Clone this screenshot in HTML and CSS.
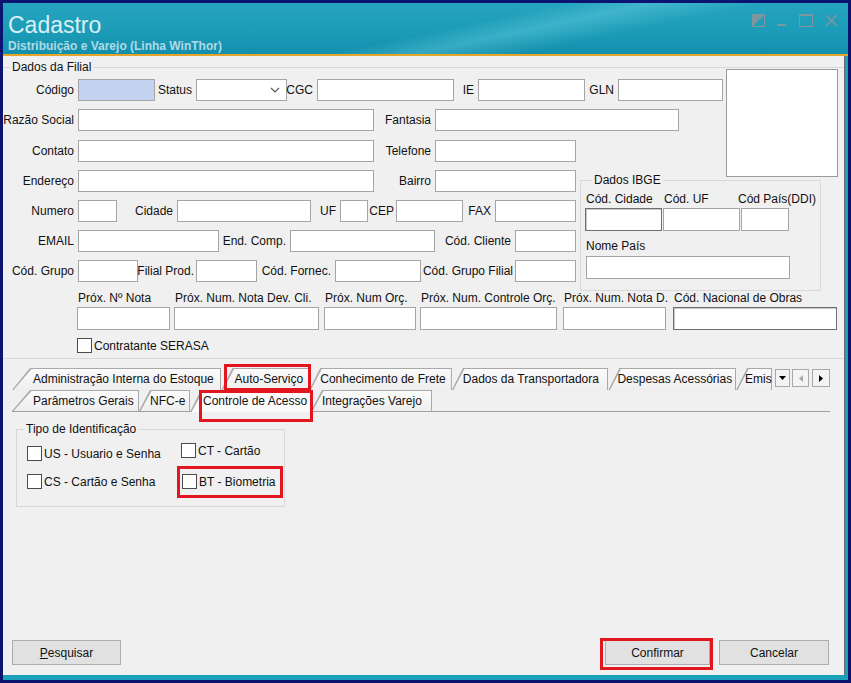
FILE: index.html
```html
<!DOCTYPE html>
<html lang="pt-BR">
<head>
<meta charset="utf-8">
<title>Cadastro</title>
<link rel="stylesheet" href="styles.css">
</head>
<body>
<div class="window">
  <header class="titlebar">
    <div class="titles">
      <div class="title">Cadastro</div>
      <div class="subtitle">Distribuição e Varejo (Linha WinThor)</div>
    </div>
    <div class="controls">
      <svg class="ctl" width="13" height="13" viewBox="0 0 13 13"><rect x="0.5" y="0.5" width="12" height="12" fill="none" stroke="currentColor"/><polygon points="0,0 13,0 0,13" fill="currentColor"/></svg>
      <svg class="ctl" width="10" height="13" viewBox="0 0 10 13"><rect x="0" y="10" width="9" height="2" fill="currentColor"/></svg>
      <svg class="ctl" width="14" height="13" viewBox="0 0 14 13"><rect x="0.5" y="0.5" width="13" height="12" fill="none" stroke="currentColor"/><rect x="0" y="0" width="14" height="2" fill="currentColor"/></svg>
      <svg class="ctl" width="13" height="13" viewBox="0 0 13 13"><path d="M1 1 L12 12 M12 1 L1 12" stroke="currentColor" stroke-width="1.6"/></svg>
    </div>
  </header>
  <div class="accent"></div>

  <main class="client">
    <section class="group filial">
      <span class="legend">Dados da Filial</span>
      <div class="filial-top">
        <div class="filial-main">
          <div class="row">
            <span class="lbl w75">Código</span><span class="field key w77"></span>
            <span class="lbl w41">Status</span>
            <span class="field select w91"><svg width="10" height="6" viewBox="0 0 10 6"><path d="M1 1 L5 5 L9 1" fill="none" stroke="#555" stroke-width="1.1"/></svg></span>
            <span class="lbl w30">CGC</span><span class="field w137"></span>
            <span class="lbl w24">IE</span><span class="field w107"></span>
            <span class="lbl w33">GLN</span><span class="field w105"></span>
          </div>
          <div class="row">
            <span class="lbl w75">Razão Social</span><span class="field w296"></span>
            <span class="lbl w61">Fantasia</span><span class="field w244"></span>
          </div>
          <div class="split">
            <div class="left-rows">
              <div class="row">
                <span class="lbl w75">Contato</span><span class="field w296"></span>
                <span class="lbl w61">Telefone</span><span class="field w141"></span>
              </div>
              <div class="row">
                <span class="lbl w75">Endereço</span><span class="field w296"></span>
                <span class="lbl w61">Bairro</span><span class="field w141"></span>
              </div>
              <div class="row">
                <span class="lbl w75">Numero</span><span class="field w39"></span>
                <span class="lbl w60">Cidade</span><span class="field w134"></span>
                <span class="lbl w29">UF</span><span class="field w28"></span>
                <span class="lbl w28 tight">CEP</span><span class="field w67"></span>
                <span class="lbl w32">FAX</span><span class="field w81"></span>
              </div>
              <div class="row">
                <span class="lbl w75">EMAIL</span><span class="field w141"></span>
                <span class="lbl w71">End. Comp.</span><span class="field w145"></span>
                <span class="lbl w80">Cód. Cliente</span><span class="field w61"></span>
              </div>
              <div class="row">
                <span class="lbl w75">Cód. Grupo</span><span class="field w60"></span>
                <span class="lbl w58 tight">Filial Prod.</span><span class="field w61"></span>
                <span class="lbl w78">Cód. Fornec.</span><span class="field w86"></span>
                <span class="lbl w94 tight">Cód. Grupo Filial</span><span class="field w61"></span>
              </div>
            </div>
            <section class="group ibge">
              <span class="legend">Dados IBGE</span>
              <div class="ibge-cols">
                <div class="col w77"><span class="cap">Cód. Cidade</span><span class="field tall dark"></span></div>
                <div class="col w77"><span class="cap">Cód. UF</span><span class="field tall"></span></div>
                <div class="col w48 ddi"><span class="cap">Cód País(DDI)</span><span class="field tall"></span></div>
              </div>
              <div class="col nome"><span class="cap">Nome País</span><span class="field tall w204"></span></div>
            </section>
          </div>
        </div>
        <div class="photo"></div>
      </div>

      <div class="next-nums">
        <div class="col w93"><span class="cap">Próx. Nº Nota</span><span class="field tall"></span></div>
        <div class="col w145"><span class="cap">Próx. Num. Nota Dev. Cli.</span><span class="field tall"></span></div>
        <div class="col w92"><span class="cap">Próx. Num Orç.</span><span class="field tall"></span></div>
        <div class="col w137"><span class="cap">Próx. Num. Controle Orç.</span><span class="field tall"></span></div>
        <div class="col w103"><span class="cap">Próx. Num. Nota D.</span><span class="field tall"></span></div>
        <div class="col w164"><span class="cap">Cód. Nacional de Obras</span><span class="field tall dark"></span></div>
      </div>

      <label class="check serasa"><span class="box"></span>Contratante SERASA</label>
    </section>

    <nav class="tabs">
      <div class="tab-row">
        <div class="tab first t-adm"><span>Administração Interna do Estoque</span></div>
        <div class="tab t-auto"><span>Auto-Serviço</span></div>
        <div class="tab t-conh"><span>Conhecimento de Frete</span></div>
        <div class="tab t-dados"><span>Dados da Transportadora</span></div>
        <div class="tab t-desp"><span>Despesas Acessórias</span></div>
        <div class="tab t-emis"><span>Emiss</span></div>
        <div class="scroll">
          <span class="sbtn down"><svg width="7" height="4" viewBox="0 0 7 4"><polygon points="0,0 7,0 3.5,4" fill="#000"/></svg></span>
          <span class="sbtn off"><svg width="4" height="7" viewBox="0 0 4 7"><polygon points="4,0 4,7 0,3.5" fill="#a8a8a8"/></svg></span>
          <span class="sbtn"><svg width="4" height="7" viewBox="0 0 4 7"><polygon points="0,0 0,7 4,3.5" fill="#000"/></svg></span>
        </div>
      </div>
      <div class="tab-row lower">
        <div class="tab first t-param"><span>Parâmetros Gerais</span></div>
        <div class="tab t-nfc"><span>NFC-e</span></div>
        <div class="tab active t-ctrl"><span>Controle de Acesso</span></div>
        <div class="tab t-integ"><span>Integrações Varejo</span></div>
      </div>
    </nav>

    <section class="panel">
      <div class="group ident">
        <span class="legend">Tipo de Identificação</span>
        <div class="ident-grid">
          <label class="check"><span class="box"></span>US - Usuario e Senha</label>
          <label class="check up"><span class="box"></span>CT - Cartão</label>
          <label class="check"><span class="box"></span>CS - Cartão e Senha</label>
          <label class="check nudge"><span class="box"></span>BT - Biometria</label>
        </div>
      </div>
    </section>

    <footer class="actions">
      <button class="btn w109"><u>P</u>esquisar</button>
      <span class="spacer"></span>
      <button class="btn w105">Confirmar</button>
      <button class="btn w110">Cancelar</button>
    </footer>
  </main>
</div>

<div class="mark m-auto"></div>
<div class="mark m-ctrl"></div>
<div class="mark m-bt"></div>
<div class="mark m-ok"></div>
</body>
</html>
```

FILE: styles.css
```css
* { box-sizing: border-box; }

html, body { margin: 0; }

body {
  position: relative;
  width: 851px;
  height: 683px;
  padding: 3px;
  overflow: hidden;
  background: #0b1470;
  font-family: "Liberation Sans", Arial, sans-serif;
  font-size: 12px;
  color: #111;
}

/* ---------- window frame ---------- */
.window {
  width: 845px;
  height: 677px;
  display: flex;
  flex-direction: column;
  background: #1aa0b8;
}

.titlebar {
  height: 51px;
  flex: none;
  display: flex;
  justify-content: space-between;
  background:
    linear-gradient(168deg, rgba(255,255,255,0) 52%, rgba(120,215,232,0.35) 60%, rgba(255,255,255,0) 70%),
    linear-gradient(180deg, #26a4bf 0%, #1b9bb7 60%, #138fac 100%);
}

.titles { padding: 9px 0 0 5px; }

.title {
  font-size: 23px;
  line-height: 26px;
  color: #d9eff5;
}

.subtitle {
  margin-top: 1px;
  font-size: 12px;
  line-height: 14px;
  font-weight: bold;
  color: #aedbe7;
}

.controls {
  display: flex;
  align-items: flex-start;
  gap: 12px;
  padding: 11px 10px 0 0;
  color: #7f969f;
}
.ctl { display: block; }

.accent {
  height: 2px;
  flex: none;
  background: #e4a52a;
}

.client {
  height: 619px;
  margin: 0 3px 0 0;
  display: flex;
  flex-direction: column;
  background: #f0f0f0;
  border-right: 1px solid #6a6a6a;
}

/* ---------- group boxes ---------- */
.group {
  border: 1px solid #d9d9d9;
}

.legend {
  display: block;
  width: fit-content;
  margin: -8px 0 0 7px;
  padding: 0 2px;
  line-height: 14px;
  background: #f0f0f0;
}

.filial {
  margin-top: 11px;
  border-left: none;
  border-right: none;
  padding-bottom: 5px;
}

.filial-top {
  display: flex;
  margin-top: -5px;
}

.filial-main {
  width: 720px;
  flex: none;
  padding-top: 10px;
  display: flex;
  flex-direction: column;
  gap: 8px;
}

.photo {
  width: 112px;
  height: 108px;
  flex: none;
  margin-left: 3px;
  background: #fff;
  border: 1px solid #9a9a9a;
}

/* lower rows share their height with the IBGE box, which reaches under the photo */
.split {
  width: 818px;
  display: flex;
  align-items: flex-start;
  margin-top: 1px;
}

.left-rows {
  width: 573px;
  flex: none;
  display: flex;
  flex-direction: column;
  gap: 8px;
}

.row {
  height: 22px;
  display: flex;
}

.lbl {
  display: flex;
  justify-content: flex-end;
  align-items: center;
  padding-right: 4px;
  white-space: nowrap;
}
.lbl.tight { padding-right: 2px; }

.field {
  display: block;
  height: 22px;
  background: #fff;
  border: 1px solid #a5a5a5;
}
.field.tall { height: 23px; }
.field.key { background: #c4d3ef; }
.field.dark { border-color: #6f6f6f; box-shadow: inset 1px 1px 0 #c8c8c8; }

.select {
  display: flex;
  align-items: center;
  justify-content: flex-end;
  padding-right: 6px;
}

/* ---------- IBGE ---------- */
.ibge {
  width: 241px;
  height: 111px;
  flex: none;
  margin: 40px 0 0 4px;
  padding: 0 0 0 4px;
}

.ibge-cols {
  display: flex;
  margin-top: 5px;
}
.ibge-cols .col + .col { margin-left: 1px; }
.ibge-cols .ddi { margin-left: 4px; }
.ddi .cap { margin-left: -3px; }

.col {
  display: flex;
  flex-direction: column;
}

.cap {
  line-height: 14px;
  margin-bottom: 2px;
  margin-left: 1px;
  white-space: nowrap;
}

.nome { margin-top: 8px; margin-left: 1px; }
.nome .cap { margin-bottom: 3px; margin-left: 0; }

/* ---------- next numbers ---------- */
.next-nums {
  display: flex;
  margin: 0 0 0 74px;
}
.next-nums .col:nth-child(2) { margin-left: 4px; }
.next-nums .col:nth-child(3) { margin-left: 5px; }
.next-nums .col:nth-child(4) { margin-left: 4px; }
.next-nums .col:nth-child(5) { margin-left: 6px; }
.next-nums .col:nth-child(6) { margin-left: 7px; }

/* ---------- check boxes ---------- */
.check {
  display: flex;
  align-items: center;
  height: 15px;
  white-space: nowrap;
}

.box {
  width: 15px;
  height: 15px;
  margin-right: 2px;
  background: #fff;
  border: 1px solid #4b4b4b;
}

.serasa {
  margin: 8px 0 0 74px;
}

/* ---------- tabs ---------- */
.tabs {
  margin: 9px 0 0 9px;
  width: 818px;
}

.tab-row {
  height: 22px;
  display: flex;
}

.tab-row.lower {
  height: 22px;
  border-bottom: 1px solid #a0a0a0;
}

.tab {
  --s: 11px;
  position: relative;
  z-index: 0;
  height: 100%;
  display: flex;
  align-items: center;
  padding-left: 11px;
  white-space: nowrap;
  overflow: hidden;
}
.tab.first { --s: 18px; padding-left: 21px; }

.tab::before,
.tab::after {
  content: "";
  position: absolute;
  z-index: -1;
  clip-path: polygon(var(--s) 0, 100% 0, 100% 100%, 0 100%);
}
.tab::before {
  inset: 0;
  background: #a9a9a9;
}
.tab::after {
  top: 1px;
  right: 1px;
  bottom: 0;
  left: 1.5px;
  background: linear-gradient(180deg, #fbfbfb 0%, #eeeeee 100%);
}

.tab.active { height: calc(100% + 1px); }
.tab.active::after {
  background: #fbfbfb;
  top: 2px;
  bottom: 0;
}
.t-ctrl::before { background: linear-gradient(180deg, #2f83d6 0 2px, #a9a9a9 2px); }

.t-adm { width: 210px; }
.t-auto { width: 88px; padding-left: 13px; }
.t-conh { width: 143px; }
.t-dados { width: 157px; }
.t-desp { width: 128px; padding-left: 9px; }
.t-emis { width: 36px; padding-left: 9px; }

.t-param { width: 127px; }
.t-nfc { width: 51px; }
.t-ctrl { width: 121px; padding-left: 13px; }
.t-integ { width: 121px; }

.scroll {
  display: flex;
  gap: 2px;
  padding-top: 1px;
  margin-left: 3px;
}

.sbtn {
  width: 15px;
  height: 18px;
  display: flex;
  align-items: center;
  justify-content: center;
  background: #f4f4f4;
  border: 1px solid #a9a9a9;
}
.sbtn.down { width: 15px; }
.sbtn.off { width: 17px; }
.sbtn:last-child { width: 18px; margin-left: 1px; }

/* ---------- tab panel ---------- */
.panel {
  padding: 17px 0 0 13px;
}

.ident {
  width: 269px;
  height: 78px;
}

.ident-grid {
  display: grid;
  grid-template-columns: 154px auto;
  row-gap: 13px;
  margin: 10px 0 0 10px;
}

.check.up { margin-top: -3px; }
.check.nudge .box { margin-left: 1px; }

/* ---------- buttons ---------- */
.actions {
  margin-top: auto;
  display: flex;
  align-items: center;
  padding: 0 15px 10px 9px;
}

.spacer { flex: 1; }

.btn {
  height: 25px;
  margin: 0;
  padding: 0;
  font: inherit;
  color: #111;
  background: #e1e1e1;
  border: 1px solid #adadad;
}
.btn + .btn { margin-left: 9px; }

/* ---------- widths ---------- */
.w24 { width: 24px; flex: none; }
.w28 { width: 28px; flex: none; }
.w29 { width: 29px; flex: none; }
.w30 { width: 30px; flex: none; }
.w32 { width: 32px; flex: none; }
.w33 { width: 33px; flex: none; }
.w39 { width: 39px; flex: none; }
.w41 { width: 41px; flex: none; }
.w48 { width: 48px; flex: none; }
.w58 { width: 58px; flex: none; }
.w60 { width: 60px; flex: none; }
.w61 { width: 61px; flex: none; }
.w67 { width: 67px; flex: none; }
.w71 { width: 71px; flex: none; }
.w75 { width: 75px; flex: none; }
.w77 { width: 77px; flex: none; }
.w78 { width: 78px; flex: none; }
.w80 { width: 80px; flex: none; }
.w81 { width: 81px; flex: none; }
.w86 { width: 86px; flex: none; }
.w91 { width: 91px; flex: none; }
.w92 { width: 92px; flex: none; }
.w93 { width: 93px; flex: none; }
.w94 { width: 94px; flex: none; }
.w103 { width: 103px; flex: none; }
.w105 { width: 105px; flex: none; }
.w107 { width: 107px; flex: none; }
.w109 { width: 109px; flex: none; }
.w110 { width: 110px; flex: none; }
.w134 { width: 134px; flex: none; }
.w137 { width: 137px; flex: none; }
.w141 { width: 141px; flex: none; }
.w145 { width: 145px; flex: none; }
.w164 { width: 164px; flex: none; }
.w204 { width: 204px; flex: none; }
.w244 { width: 244px; flex: none; }
.w296 { width: 296px; flex: none; }

/* ---------- red call-out frames ---------- */
.mark {
  position: absolute;
  border: 3px solid #e3161f;
}
.m-auto { left: 224px; top: 364px; width: 87px; height: 27px; }
.m-ctrl { left: 199px; top: 390px; width: 114px; height: 32px; }
.m-bt   { left: 177px; top: 466px; width: 106px; height: 32px; }
.m-ok   { left: 600px; top: 638px; width: 113px; height: 32px; }
```
